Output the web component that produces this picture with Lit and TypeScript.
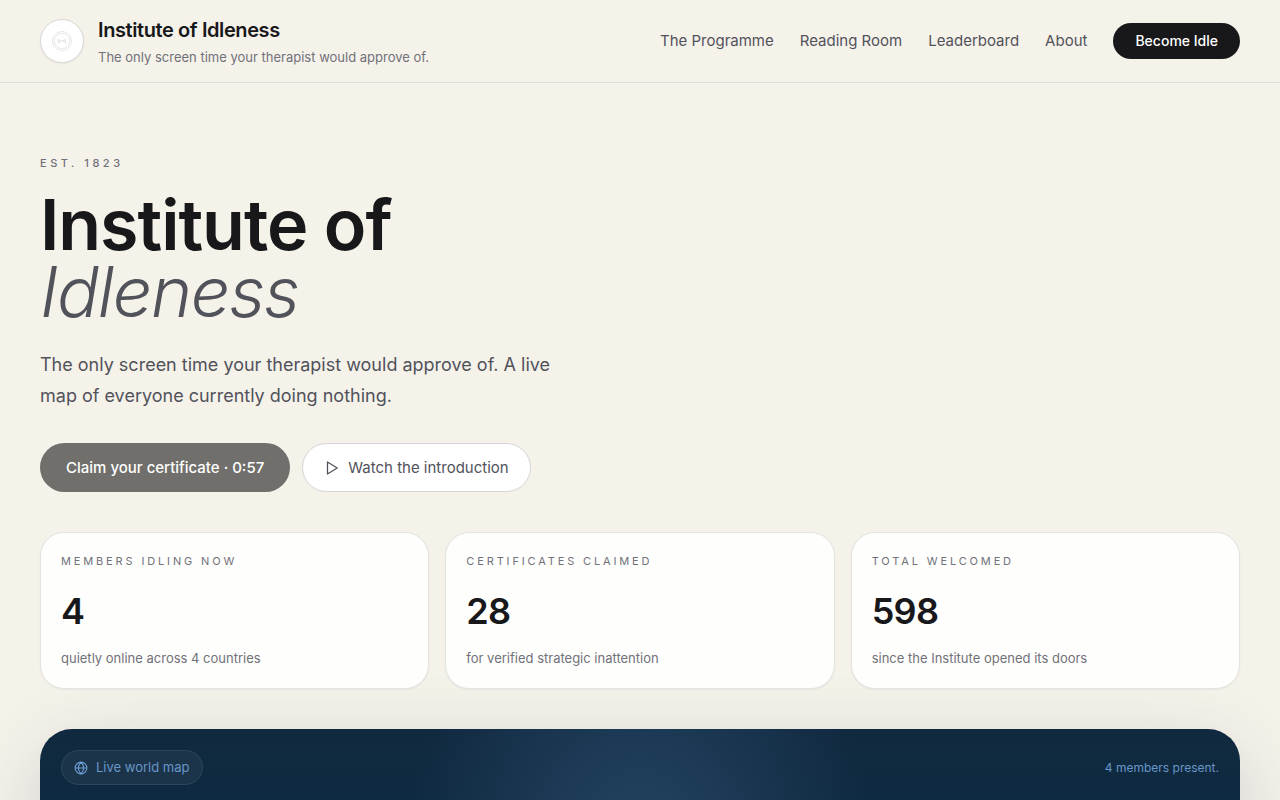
import { LitElement, html, css, svg } from "lit";
import { customElement, property } from "lit/decorators.js";

@customElement("stat-card")
class StatCard extends LitElement {
  @property() label = "";
  @property() value = "";
  @property() note = "";

  static styles = css`
    :host {
      display: block;
      padding: 20px;
      border: 1px solid #e3e3e2;
      border-radius: 24px;
      background: #fefefc;
      box-shadow: 0 1px 2px rgba(0, 0, 0, 0.05);
    }
    p, h2 { margin: 0; }
    .label {
      font-size: 11px;
      line-height: 16px;
      font-weight: 400;
      letter-spacing: 0.26em;
      text-transform: uppercase;
      color: #71717a;
    }
    .value {
      margin-top: 20px;
      font-size: 36px;
      line-height: 44px;
      font-weight: 600;
      letter-spacing: -0.02em;
      color: #18181b;
    }
    .note {
      margin-top: 15px;
      font-size: 13px;
      line-height: 20px;
      color: #71717a;
    }
  `;

  render() {
    return html`
      <h2 class="label">${this.label}</h2>
      <p class="value">${this.value}</p>
      <p class="note">${this.note}</p>
    `;
  }
}

const seal = svg`
  <g fill="none" stroke="#dededf" stroke-width="0.8">
    <path d="M12 1.5 L17 2.8 L21 6.5 L22.5 12 L21 17.5 L17 21.2 L12 22.5 L7 21.2 L3 17.5 L1.5 12 L3 6.5 L7 2.8 Z"/>
    <circle cx="12" cy="12" r="8.4"/>
    <path d="M8 10 L10.8 12 L8 14 Z M16 10 L13.2 12 L16 14 Z M10.8 12 H13.2" stroke-width="1"/>
  </g>`;

@customElement("app-root")
class AppRoot extends LitElement {
  static styles = css`
    :host {
      display: block;
      min-height: 100vh;
      background: #f5f2ea;
      color: #18181b;
      font-family: Inter, "Liberation Sans", sans-serif;
    }
    * { box-sizing: border-box; }
    h1, p { margin: 0; }
    a { color: inherit; text-decoration: none; }
    button { font-family: inherit; cursor: pointer; }
    .header {
      display: flex;
      align-items: center;
      justify-content: space-between;
      padding: 15px 40px;
      border-bottom: 1px solid #dedcd6;
    }
    .brand { display: flex; align-items: center; gap: 14px; }
    .mark {
      display: flex;
      align-items: center;
      justify-content: center;
      width: 44px;
      height: 44px;
      border: 1px solid #d8d8da;
      border-radius: 50%;
      background: #fff;
      box-shadow: 0 1px 2px rgba(0, 0, 0, 0.06);
    }
    .brand-name {
      font-size: 20px;
      line-height: 30px;
      font-weight: 600;
      letter-spacing: -0.02em;
    }
    .brand-line {
      font-size: 13px;
      line-height: 20px;
      margin-top: 2px;
      color: #71717a;
    }
    .nav {
      display: flex;
      align-items: center;
      gap: 26px;
      font-size: 15px;
      line-height: 20px;
      color: #52525b;
    }
    .join {
      padding: 8px 22px;
      border: 0;
      border-radius: 99px;
      background: #18181b;
      color: #fff;
      font-size: 14px;
      line-height: 20px;
      font-weight: 500;
    }
    .main { padding: 72px 40px 80px; }
    .eyebrow {
      font-size: 11px;
      line-height: 16px;
      font-weight: 500;
      letter-spacing: 0.32em;
      color: #71717a;
    }
    .title {
      margin-top: 20px;
      font-size: 70px;
      line-height: 67px;
      font-weight: 600;
      letter-spacing: -0.015em;
    }
    .title em {
      display: block;
      font-weight: 300;
      letter-spacing: -0.02em;
      color: #52525b;
    }
    .lead {
      max-width: 520px;
      margin-top: 24px;
      font-size: 18px;
      line-height: 31px;
      color: #52525b;
    }
    .actions { display: flex; gap: 12px; margin-top: 32px; }
    .action {
      display: flex;
      align-items: center;
      gap: 8px;
      padding: 12px 26px;
      border: 0;
      border-radius: 99px;
      font-size: 15px;
      line-height: 25px;
    }
    .claim { background: #706f6b; color: #fff; font-weight: 500; }
    .watch {
      padding: 11px 21px;
      border: 1px solid #d4d4d8;
      background: #fff;
      color: #52525b;
    }
    .stats {
      display: grid;
      grid-template-columns: repeat(3, 1fr);
      gap: 16px;
      margin-top: 40px;
    }
    .map {
      min-height: 560px;
      margin-top: 40px;
      padding: 21px;
      border-radius: 32px;
      background:
        radial-gradient(ellipse 230px 260px at 50% 110px, #21435f 0%, #1d3b57 35%, rgba(15, 42, 65, 0) 100%),
        linear-gradient(180deg, #11293f 0px, #0e2a40 70px);
      box-shadow: 0 24px 80px rgba(15, 42, 65, 0.18);
    }
    .map-bar {
      display: flex;
      align-items: center;
      justify-content: space-between;
      color: #6896c8;
    }
    .tag {
      display: flex;
      align-items: center;
      gap: 8px;
      padding: 6px 12px;
      border: 1px solid #2c475d;
      border-radius: 99px;
      background: #1b3449;
      font-size: 13px;
      line-height: 21px;
    }
    .present { font-size: 12px; line-height: 18px; }
  `;

  render() {
    return html`
      <header class="header">
        <a class="brand" href="#">
          <span class="mark">
            <svg width="22" height="22" viewBox="0 0 24 24" aria-hidden="true">${seal}</svg>
          </span>
          <div>
            <p class="brand-name">Institute of Idleness</p>
            <p class="brand-line">The only screen time your therapist would approve of.</p>
          </div>
        </a>
        <nav class="nav">
          <a href="#programme">The Programme</a>
          <a href="#reading">Reading Room</a>
          <a href="#leaderboard">Leaderboard</a>
          <a href="#about">About</a>
          <button class="join">Become Idle</button>
        </nav>
      </header>
      <main class="main">
        <p class="eyebrow">EST. 1823</p>
        <h1 class="title">Institute of <em>Idleness</em></h1>
        <p class="lead">
          The only screen time your therapist would approve of. A live map of everyone currently doing nothing.
        </p>
        <div class="actions">
          <button class="action claim">Claim your certificate · 0:57</button>
          <button class="action watch">
            <svg width="16" height="16" viewBox="0 0 16 16" aria-hidden="true">
              <path d="M3.5 2 L13.2 8 L3.5 14 Z" fill="none" stroke="#52525b" stroke-width="1.3" stroke-linejoin="round"/>
            </svg>
            Watch the introduction
          </button>
        </div>
        <section class="stats">
          <stat-card label="Members idling now" value="4" note="quietly online across 4 countries"></stat-card>
          <stat-card label="Certificates claimed" value="28" note="for verified strategic inattention"></stat-card>
          <stat-card label="Total welcomed" value="598" note="since the Institute opened its doors"></stat-card>
        </section>
        <section class="map">
          <div class="map-bar">
            <span class="tag">
              <svg width="14" height="14" viewBox="0 0 24 24" aria-hidden="true">
                <g fill="none" stroke="#6f9fd6" stroke-width="1.9">
                  <circle cx="12" cy="12" r="10"/>
                  <path d="M12 2 C6 8 6 16 12 22 C18 16 18 8 12 2 M2 12 H22"/>
                </g>
              </svg>
              Live world map
            </span>
            <span class="present">4 members present.</span>
          </div>
        </section>
      </main>
    `;
  }
}
